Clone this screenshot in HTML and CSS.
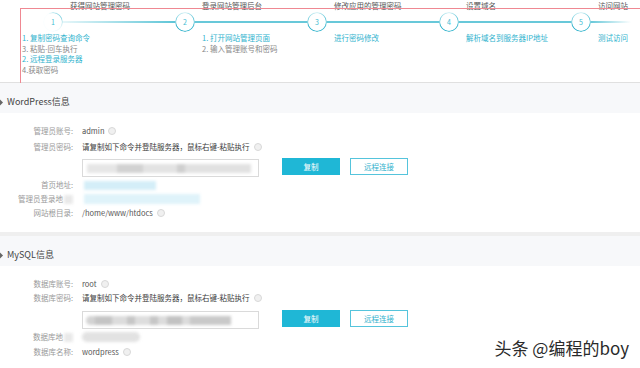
FILE: index.html
```html
<!DOCTYPE html>
<html lang="zh-CN">
<head>
<meta charset="utf-8">
<title>WordPress 信息</title>
<link rel="stylesheet" href="styles.css">
</head>
<body>
<div class="steps">
  <div class="step">
    <div class="step-title">获得网站管理密码</div>
    <div class="track"><span class="dot dot-first">1</span><span class="bar bar-first"></span></div>
    <div class="desc desc-first">
      <div class="on">1. 复制密码查询命令</div>
      <div>3. 粘贴-回车执行</div>
      <div class="on">2. 远程登录服务器</div>
      <div>4.获取密码</div>
    </div>
  </div>
  <div class="step">
    <div class="step-title">登录网站管理后台</div>
    <div class="track"><span class="dot">2</span><span class="bar"></span></div>
    <div class="desc">
      <div class="on">1. 打开网站管理页面</div>
      <div>2. 输入管理账号和密码</div>
    </div>
  </div>
  <div class="step">
    <div class="step-title">修改应用的管理密码</div>
    <div class="track"><span class="dot">3</span><span class="bar"></span></div>
    <div class="desc"><div class="on">进行密码修改</div></div>
  </div>
  <div class="step">
    <div class="step-title">设置域名</div>
    <div class="track"><span class="dot">4</span><span class="bar"></span></div>
    <div class="desc"><div class="on">解析域名到服务器IP地址</div></div>
  </div>
  <div class="step">
    <div class="step-title">访问网站</div>
    <div class="track"><span class="dot">5</span><span class="bar bar-last"></span></div>
    <div class="desc"><div class="on">测试访问</div></div>
  </div>
</div>
<div class="annot"></div>

<section class="panel">
  <div class="panel-head"><span class="mark"></span>WordPress信息</div>
  <div class="panel-body body-wp">
    <div class="row row-first"><span class="label">管理员账号:</span><span class="value">admin</span><span class="help"></span></div>
    <div class="row row-pwd"><span class="label">管理员密码:</span><span class="value text-dark">请复制如下命令并登陆服务器，鼠标右键-粘贴执行</span><span class="help"></span></div>
    <div class="row row-input">
      <div class="field"><div class="smudge smudge-wp"></div></div>
      <span class="btn btn-primary">复制</span>
      <span class="btn btn-ghost">远程连接</span>
    </div>
    <div class="row row-tight"><span class="label">首页地址:</span><span class="blurval blue-a"></span></div>
    <div class="row"><span class="label">管理员登录地<span class="label-blur"></span></span><span class="blurval blue-b"></span></div>
    <div class="row"><span class="label">网站根目录:</span><span class="value">/home/www/htdocs</span><span class="help"></span></div>
  </div>
</section>

<section class="panel panel-next">
  <div class="panel-head"><span class="mark"></span>MySQL信息</div>
  <div class="panel-body">
    <div class="row row-first"><span class="label">数据库账号:</span><span class="value">root</span><span class="help"></span></div>
    <div class="row"><span class="label">数据库密码:</span><span class="value text-dark">请复制如下命令并登陆服务器，鼠标右键-粘贴执行</span><span class="help"></span></div>
    <div class="row row-input row-input2">
      <div class="field"><div class="smudge smudge-db"></div></div>
      <span class="btn btn-primary">复制</span>
      <span class="btn btn-ghost">远程连接</span>
    </div>
    <div class="row row-tight"><span class="label">数据库地<span class="label-blur"></span></span><span class="blurval gray-a"></span></div>
    <div class="row row-tight"><span class="label">数据库名称:</span><span class="value">wordpress</span><span class="help"></span></div>
  </div>
</section>

<div class="watermark">头条 @编程的boy</div>
</body>
</html>
```
FILE: styles.css
```css
* { box-sizing: border-box; margin: 0; padding: 0; }
html, body { width: 640px; height: 368px; overflow: hidden; background: #fff; }
body {
  font-family: "Noto Sans CJK SC", "Noto Sans", sans-serif;
  font-size: 7.5px;
  color: #555;
  position: relative;
}

/* steps */
.steps {
  display: grid;
  grid-template-columns: repeat(4, 132px) 76px;
  padding-left: 36px;
  height: 83px;
  border-bottom: 1px solid #e0e0e0;
}
.step { min-width: 0; }
.step-title {
  padding: 1.5px 0 0 34px;
  line-height: 8px;
  color: #555;
  white-space: nowrap;
}
.track {
  display: flex;
  align-items: center;
  height: 20px;
  margin-top: 2.5px;
}
.dot {
  flex: none;
  width: 20px;
  height: 20px;
  margin-left: 7px;
  border-radius: 50%;
  display: flex;
  align-items: center;
  justify-content: center;
  color: #45bcd2;
  font-size: 7px;
  position: relative;
}
.dot::before {
  content: "";
  position: absolute;
  inset: 0;
  border-radius: 50%;
  background: conic-gradient(from 0deg, #d6f1f5 0deg, #62c6d8 80deg, #44bad0 170deg, #3eb7ce 240deg, #b5e6ee 320deg, #d6f1f5 360deg);
  -webkit-mask: radial-gradient(circle, transparent 8.4px, #000 9px);
  mask: radial-gradient(circle, transparent 8.4px, #000 9px);
}
.dot-first::before {
  background: conic-gradient(from 0deg, #bfe8ef 0deg, #8fd6e3 60deg, #e8f7fa 120deg, #fbfeff 200deg, #fbfeff 330deg, #bfe8ef 360deg);
}
.bar {
  flex: 1;
  height: 2px;
  background: #68c8d9;
  margin-right: -7px;
}
.bar-first { background: linear-gradient(90deg, #e6f6f9, #5ec5d7); }
.bar-last {
  flex: none;
  width: 40px;
  margin-right: 0;
  background: linear-gradient(90deg, #68c8d9, rgba(255,255,255,0));
}
.desc {
  padding-left: 34px;
  margin-top: 1px;
  line-height: 10.6px;
  color: #888;
  white-space: nowrap;
}
.desc .on { color: #2fb3ce; }
.desc-first { margin-left: -48px; }

.annot {
  position: absolute;
  left: 20px;
  top: 8px;
  width: 620px;
  height: 77px;
  border: 1.5px solid #ef8892;
  border-right: none;
  pointer-events: none;
}

/* panels */
.panel-head {
  position: relative;
  height: 30px;
  padding: 13px 0 0 7px;
  line-height: 12px;
  font-size: 9px;
  color: #444;
  background: #f7f8fa;
}
.panel-next .panel-head {
  height: 34px;
  border-top: 4px solid #efefef;
}
.mark {
  position: absolute;
  left: -3px;
  top: 17px;
  width: 5px;
  height: 5px;
  background: #666;
  transform: rotate(45deg);
}
.panel-body { display: flex; flex-direction: column; }
.body-wp { padding-bottom: 12px; }

.row {
  display: flex;
  align-items: center;
  height: 14px;
  line-height: 14px;
  white-space: nowrap;
}
.row-first { margin-top: 11px; }
.row-pwd { margin-top: 2px; }
.row-tight { margin-top: 1px; }
.row-input {
  height: 19px;
  align-items: flex-start;
  margin-top: 4px;
}
.row-input2 { margin-top: 5px; }
.label {
  flex: none;
  width: 73px;
  text-align: right;
  color: #999;
  display: flex;
  justify-content: flex-end;
  align-items: center;
}
.label-blur {
  width: 9px;
  height: 9px;
  margin-left: 1px;
  background: #e9e9e9;
  filter: blur(1.5px);
}
.value { margin-left: 9px; color: #555; }
.text-dark { color: #3a3a3a; }
.help {
  flex: none;
  width: 8px;
  height: 8px;
  margin-left: 4px;
  border-radius: 50%;
  border: 1.5px solid #d8d8d8;
  background: #f0f0f0;
}

.field {
  position: relative;
  flex: none;
  margin-left: 82px;
  margin-top: 1px;
  width: 177px;
  height: 18px;
  border: 1px solid #dadada;
  overflow: hidden;
  background: #fff;
}
.smudge {
  position: absolute;
  top: 4px;
  height: 9px;
  filter: blur(1.5px);
}
.smudge-wp {
  left: 4px;
  width: 164px;
  background: linear-gradient(90deg, #e6e6e6 0 18%, #d2d2d2 18% 34%, #e3e3e3 34% 55%, #cfcfcf 55% 60%, #e1e1e1 60% 100%);
}
.smudge-db {
  left: 3px;
  width: 145px;
  border-radius: 5px 0 0 5px;
  background: linear-gradient(90deg, #d3d3d3 0 6%, #c4c4c4 6% 18%, #dcdcdc 18% 28%, #c6c6c6 28% 34%, #dddddd 34% 44%, #c6c6c6 44% 50%, #dcdcdc 50% 56%, #c2c2c2 56% 66%, #dcdcdc 66% 72%, #c9c9c9 72% 100%);
}
.btn {
  flex: none;
  width: 58px;
  height: 17px;
  display: flex;
  align-items: center;
  justify-content: center;
}
.btn-primary {
  margin-left: 23px;
  background: #1fb7d6;
  color: #fff;
}
.btn-ghost {
  margin-left: 10px;
  border: 1px solid #55c4dc;
  color: #2fb1cd;
  background: #fff;
}
.blurval {
  margin-left: 11px;
  height: 9px;
  filter: blur(1.5px);
}
.blue-a { width: 72px; background: #d4eef8; }
.blue-b { width: 116px; height: 10px; background: #dff3fa; }
.gray-a { margin-left: 9px; width: 58px; height: 10px; border-radius: 5px; background: #e2e2e2; }

.watermark {
  position: absolute;
  right: 11px;
  top: 337px;
  font-size: 17px;
  line-height: 22px;
  color: #2a2a2a;
  text-shadow: 0 0 2px #fff, 0 0 2px #fff;
  white-space: nowrap;
}
```
